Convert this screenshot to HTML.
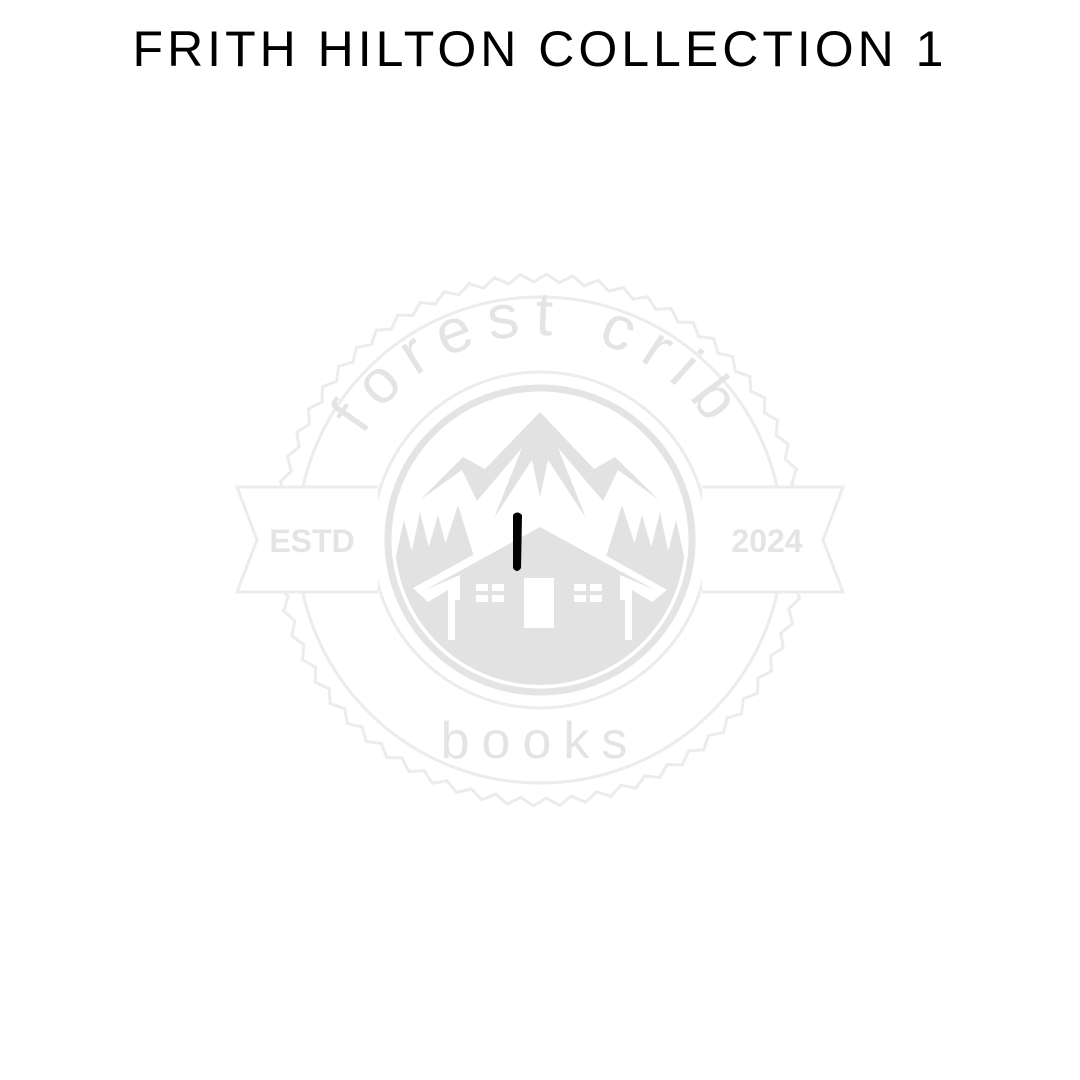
<!DOCTYPE html>
<html><head><meta charset="utf-8"><style>
html,body{margin:0;padding:0;background:#fff;width:1080px;height:1080px;overflow:hidden}
.t{position:absolute;top:20px;left:0;width:1080px;text-align:center;font-family:"Liberation Sans",sans-serif;font-size:50px;color:#000;letter-spacing:4px}
</style></head><body>
<div class="t">FRITH HILTON COLLECTION 1</div>
<svg width="1080" height="1080" style="position:absolute;left:0;top:0">
<defs>
<clipPath id="disc"><circle cx="540" cy="540" r="145"/></clipPath>
<path id="arc" d="M335 540 A205 205 0 0 1 745 540"/>
</defs>
<path id="scal" fill="none" stroke="#ececec" stroke-width="3"/>
<circle cx="540" cy="540" r="243" fill="none" stroke="#ececec" stroke-width="3"/>
<circle cx="540" cy="540" r="168" fill="none" stroke="#ececec" stroke-width="3"/>
<circle cx="540" cy="540" r="152" fill="none" stroke="#e4e4e4" stroke-width="7"/>
<g clip-path="url(#disc)" fill="#e2e2e2">
<rect x="380" y="555" width="320" height="150"/>
<path d="M420 500 L463 457 L485 469 L540 412 L594 469 L615 457 L659 500 L618 470 L603 501 L558 448 L586 518 L548 460 L540 497 L532 460 L494 518 L522 448 L477 501 L462 470 Z"/>
<path d="M395 560 L404 520 L414 560 Z M410 560 L420 512 L432 560Z M425 560 L438 515 L450 560Z M440 560 L458 505 L475 560Z"/>
<path d="M685 560 L676 520 L666 560 Z M670 560 L660 512 L648 560Z M655 560 L642 515 L630 560Z M640 560 L622 505 L605 560Z"/>
</g>
<path d="M413 588 L540 518 L582 541 L582 532 L598 532 L598 551 L667 590 L652 602 L632 590 L632 640 L448 640 L448 590 L428 602Z" fill="#fff"/>
<path d="M425 590 L540 527 L655 590 L620 575 L620 640 L460 640 L460 575Z" fill="#e2e2e2"/>
<rect x="455" y="600" width="170" height="45" fill="#e2e2e2"/>
<rect x="524" y="578" width="30" height="50" fill="#fff"/>
<g fill="#fff"><rect x="476" y="584" width="12" height="7"/><rect x="476" y="595" width="12" height="7"/><rect x="492" y="584" width="12" height="7"/><rect x="492" y="595" width="12" height="7"/>
<rect x="574" y="584" width="12" height="7"/><rect x="574" y="595" width="12" height="7"/><rect x="590" y="584" width="12" height="7"/><rect x="590" y="595" width="12" height="7"/></g>
<path d="M378 487 L237 487 L257 540 L237 592 L378 592" fill="#fff" stroke="#ececec" stroke-width="3"/>
<path d="M702 487 L843 487 L823 540 L843 592 L702 592" fill="#fff" stroke="#ececec" stroke-width="3"/>
<text x="312" y="552" font-family="Liberation Sans,sans-serif" font-weight="bold" font-size="32" fill="#e4e4e4" text-anchor="middle">ESTD</text>
<text x="767" y="552" font-family="Liberation Sans,sans-serif" font-weight="bold" font-size="32" fill="#e4e4e4" text-anchor="middle">2024</text>
<text font-family="Liberation Sans,sans-serif" font-size="62" fill="#e4e4e4" letter-spacing="14"><textPath href="#arc" startOffset="50%" text-anchor="middle">forest crib</textPath></text>
<text font-family="Liberation Sans,sans-serif" font-size="52" fill="#e4e4e4" letter-spacing="12" text-anchor="middle" x="540" y="758">books</text>
<path d="M513 515 Q517 510 522 515 L521 568 Q517 574 513 568 Z" fill="#000"/>
</svg>
<script>
var d="",n=64;for(var i=0;i<=n*4;i++){var a=i/(n*4)*Math.PI*2;var r=262+4*Math.sin(i/4*Math.PI*2);d+=(i?"L":"M")+(540+r*Math.cos(a)).toFixed(1)+" "+(540+r*Math.sin(a)).toFixed(1);}
document.getElementById("scal").setAttribute("d",d+"Z");
</script>
</body></html>
